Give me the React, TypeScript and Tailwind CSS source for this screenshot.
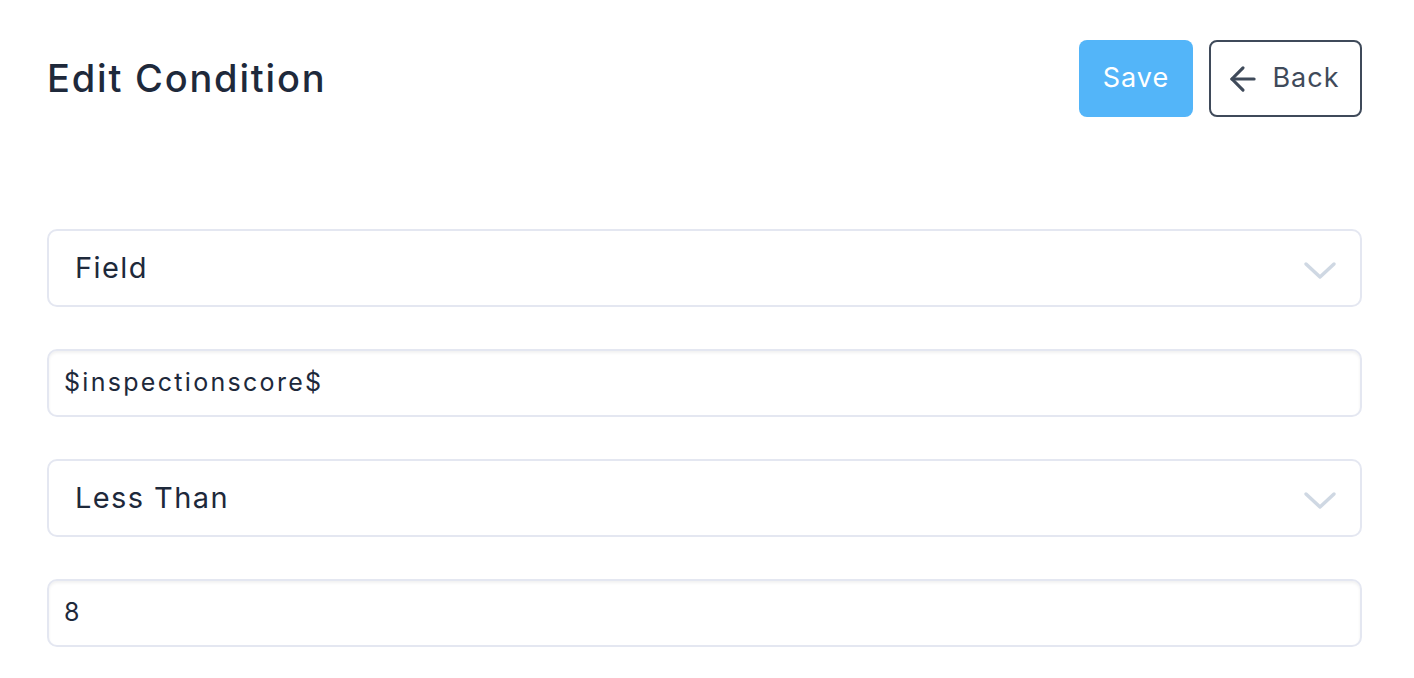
import { ArrowLeft } from 'lucide-react'

function Chevron() {
  return (
    <svg width="34" height="20" viewBox="0 0 34 20" fill="none" className="mt-[6px] text-[#cfd8e3]">
      <polyline points="3,3 17,16 31,3" stroke="currentColor" strokeWidth="3.5" strokeLinecap="round" strokeLinejoin="round" />
    </svg>
  )
}

function SelectBox({ label }: { label: string }) {
  return (
    <div className="flex h-[78px] items-center justify-between rounded-[10px] border-2 border-[#e4e7f1] bg-white pl-[26px] pr-[23px]">
      <span className="text-[29px] tracking-[1.4px] text-[#1e293b]">{label}</span>
      <Chevron />
    </div>
  )
}

function TextBox({ value }: { value: string }) {
  return (
    <div className="flex h-[68px] items-center rounded-[10px] border-2 border-[#e4e7f1] bg-white pl-[15px] shadow-[inset_0_2px_3px_rgba(0,0,0,0.06)]">
      <span className="text-[25px] tracking-[2.3px] text-[#1e293b]">{value}</span>
    </div>
  )
}

export default function App() {
  return (
    <div className="min-h-screen bg-white px-[47px] pt-[40px]" style={{ fontFamily: 'Inter, "Noto Sans", sans-serif' }}>
      {/* Header */}
      <div className="flex items-center justify-between">
        <h1 className="text-[38px] font-medium tracking-[1.8px] text-[#1e293b]">Edit Condition</h1>
        <div className="flex items-center gap-4 pr-[5px]">
          <button className="h-[77px] w-[114px] rounded-lg bg-[#53b5f9] text-[27px] tracking-[1px] text-white">
            Save
          </button>
          <button className="flex h-[77px] w-[153px] items-center justify-center gap-[15px] rounded-lg border-2 border-[#3f4a5a] pr-[2px] text-[27px] tracking-[1px] text-[#3f4a5a]">
            <ArrowLeft className="h-[38px] w-[38px] -mx-[5px]" strokeWidth={2} />
            Back
          </button>
        </div>
      </div>

      {/* Form */}
      <div className="mt-[112px] flex flex-col gap-[42px] pr-[5px]">
        <SelectBox label="Field" />
        <TextBox value="$inspectionscore$" />
        <SelectBox label="Less Than" />
        <TextBox value="8" />
      </div>
    </div>
  )
}
